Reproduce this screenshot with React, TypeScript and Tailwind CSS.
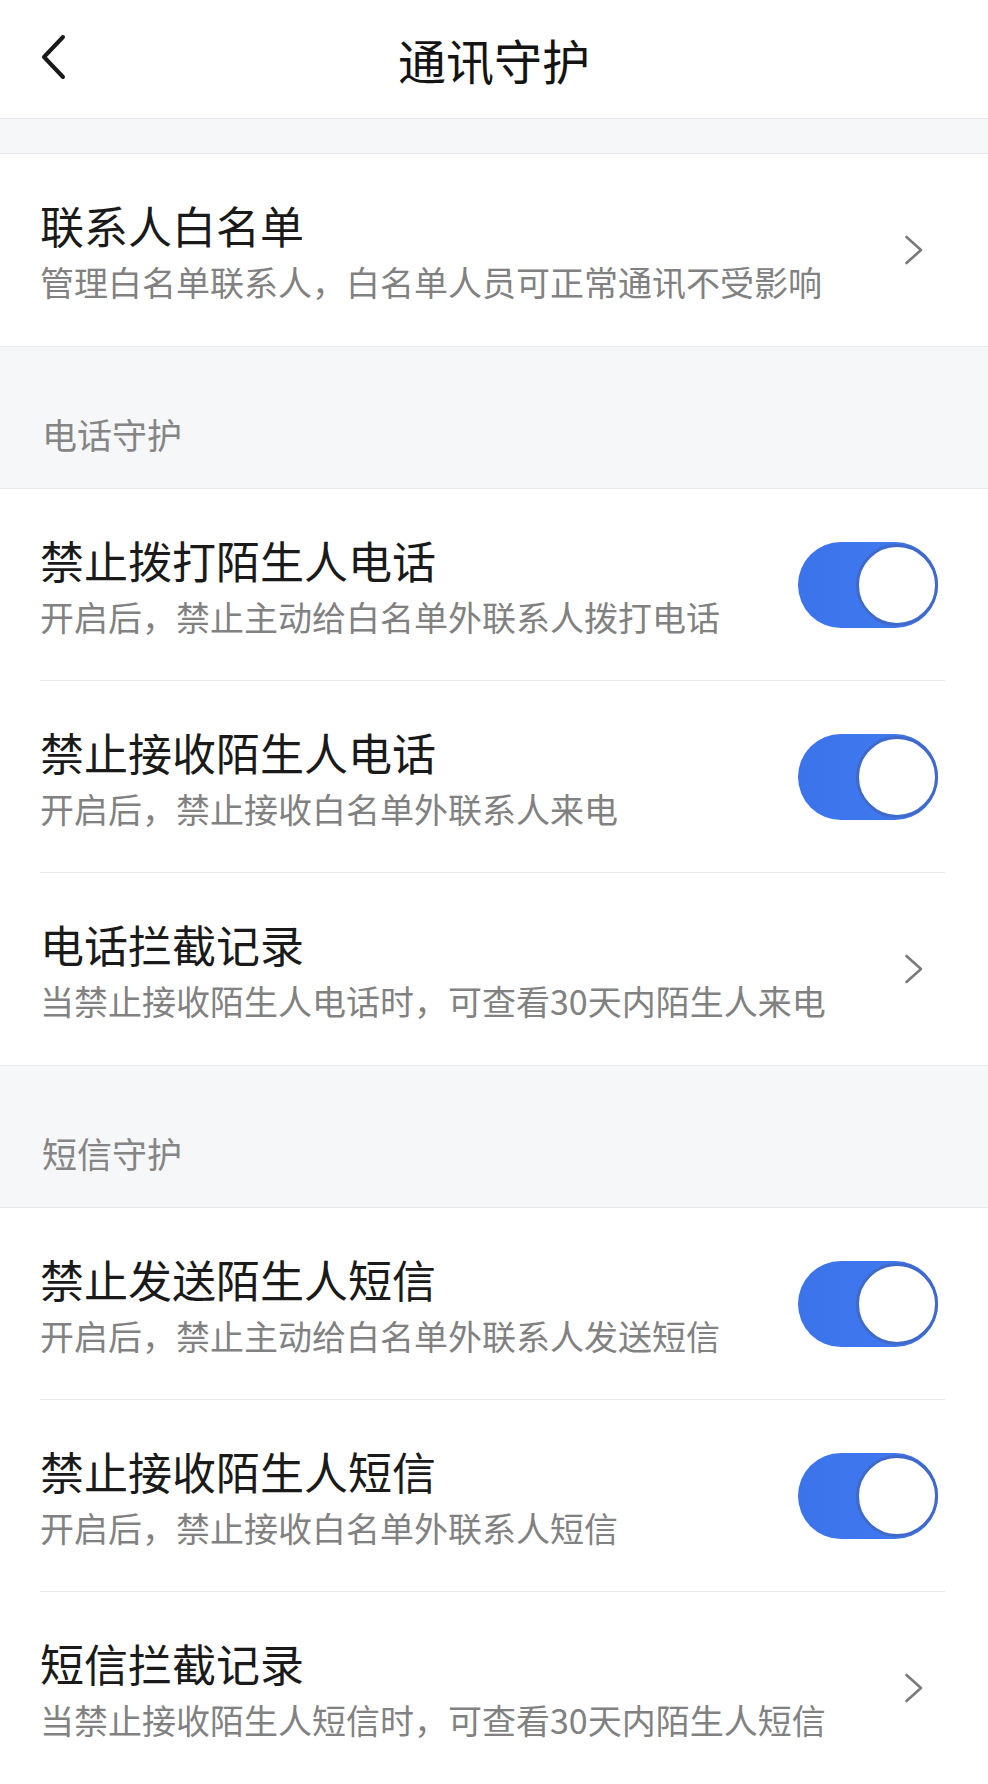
import React from "react";

const FONT = { fontFamily: '"Noto Sans CJK SC", "Noto Sans", sans-serif' };

function Chevron() {
  return (
    <svg width="20" height="30" viewBox="0 0 20 30" className="shrink-0">
      <polyline
        points="2.5,2 17,15 2.5,28"
        fill="none"
        stroke="#7a7a7a"
        strokeWidth="2.6"
        strokeLinecap="round"
        strokeLinejoin="round"
      />
    </svg>
  );
}

function Toggle() {
  return (
    <div className="flex h-[86px] w-[140px] shrink-0 items-center justify-end rounded-full bg-[linear-gradient(90deg,#3b73ea_0%,#3f78ee_55%,#4670d8_100%)]">
      <div className="h-[82px] w-[82px] rounded-full border-[3px] border-[#4069cc] bg-white" />
    </div>
  );
}

type Row = {
  title: string;
  desc: string;
  kind: "toggle" | "link";
};

function ListRow({ row, divider }: { row: Row; divider: boolean }) {
  return (
    <div className="relative flex h-[192px] items-start bg-white">
      <div className="flex flex-1 flex-col gap-[7px] pl-[40px] pt-[43px]">
        <div className="text-[44px] leading-[56px] text-[#1a1a1a]">{row.title}</div>
        <div className="text-[34px] leading-[44px] text-[#818181]">{row.desc}</div>
      </div>
      <div className="flex h-full items-center">
        {row.kind === "toggle" ? (
          <div className="mr-[50px]">
            <Toggle />
          </div>
        ) : (
          <div className="mr-[64px]">
            <Chevron />
          </div>
        )}
      </div>
      {divider && (
        <div className="absolute bottom-0 left-[40px] right-[43px] h-px bg-[#ebebeb]" />
      )}
    </div>
  );
}

function SectionLabel({ text }: { text: string }) {
  return (
    <div className="h-[143px] border-y border-[#e8e9ec] bg-[#f6f7f9] pl-[42px] pt-[65px]">
      <div className="text-[35px] leading-[44px] text-[#858585]">{text}</div>
    </div>
  );
}

const phoneRows: Row[] = [
  { title: "禁止拨打陌生人电话", desc: "开启后，禁止主动给白名单外联系人拨打电话", kind: "toggle" },
  { title: "禁止接收陌生人电话", desc: "开启后，禁止接收白名单外联系人来电", kind: "toggle" },
  { title: "电话拦截记录", desc: "当禁止接收陌生人电话时，可查看30天内陌生人来电", kind: "link" },
];

const smsRows: Row[] = [
  { title: "禁止发送陌生人短信", desc: "开启后，禁止主动给白名单外联系人发送短信", kind: "toggle" },
  { title: "禁止接收陌生人短信", desc: "开启后，禁止接收白名单外联系人短信", kind: "toggle" },
  { title: "短信拦截记录", desc: "当禁止接收陌生人短信时，可查看30天内陌生人短信", kind: "link" },
];

export default function App() {
  return (
    <div className="h-[1784px] w-[988px] overflow-hidden bg-white" style={FONT}>
      {/* Header */}
      <div className="relative flex h-[118px] items-center justify-center bg-white">
        <svg
          width="28"
          height="46"
          viewBox="0 0 28 46"
          className="absolute left-[39px] top-[34px]"
        >
          <polyline
            points="24,3 5,23 24,43"
            fill="none"
            stroke="#1a1a1a"
            strokeWidth="4"
            strokeLinecap="round"
            strokeLinejoin="round"
          />
        </svg>
        <div className="text-[48px] leading-none text-[#141414]">通讯守护</div>
      </div>

      <div className="h-[36px] border-y border-[#e6e8eb] bg-[#f6f7f9]" />

      <ListRow
        row={{
          title: "联系人白名单",
          desc: "管理白名单联系人，白名单人员可正常通讯不受影响",
          kind: "link",
        }}
        divider={false}
      />

      <SectionLabel text="电话守护" />
      {phoneRows.map((r, i) => (
        <ListRow key={r.title} row={r} divider={i < phoneRows.length - 1} />
      ))}

      <SectionLabel text="短信守护" />
      {smsRows.map((r, i) => (
        <ListRow key={r.title} row={r} divider={i < smsRows.length - 1} />
      ))}
    </div>
  );
}
